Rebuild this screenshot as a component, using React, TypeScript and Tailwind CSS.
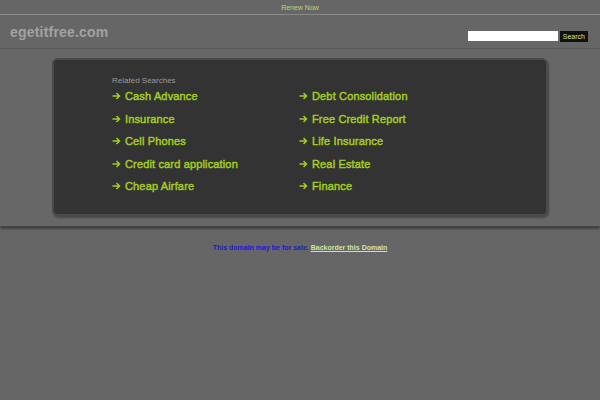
import React from "react";

const leftLinks = ["Cash Advance", "Insurance", "Cell Phones", "Credit card application", "Cheap Airfare"];
const rightLinks = ["Debt Consolidation", "Free Credit Report", "Life Insurance", "Real Estate", "Finance"];

const Arrow = () => (
  <svg width="9" height="8" viewBox="0 0 9 8" className="mr-[4px] shrink-0">
    <path d="M0.5 4H7.5M4.5 1L7.5 4L4.5 7" stroke="#a4cc22" strokeWidth="1.5" fill="none" />
  </svg>
);

const LinkItem = ({ label }: { label: string }) => (
  <a
    href="#"
    className="flex items-center h-[22.5px] text-[11px] text-[#a4cc22] no-underline [-webkit-text-stroke:0.45px_#a4cc22] tracking-[0.15px]"
  >
    <Arrow />
    <span>{label}</span>
  </a>
);

export default function App() {
  return (
    <div className="min-h-[400px] w-full bg-[#666666] font-['Liberation_Sans',Arial,sans-serif]">
      {/* top bar */}
      <div className="h-[15px] flex items-center justify-center border-b border-[#8a8a8a]">
        <a href="#" className="text-[7px] text-[#c4d27a] leading-none">Renew Now</a>
      </div>

      {/* header */}
      <div className="h-[34px] flex items-center justify-between px-[10px] border-b border-[#585858]">
        <div className="text-[14px] font-bold text-[#a2a2a2] mt-[1px] tracking-[0.2px]">egetitfree.com</div>
        <div className="flex items-center gap-[2px] mt-[9px] pr-[2px]">
          <input className="w-[90px] h-[10px] bg-white border-0 outline-none" />
          <button className="h-[11px] px-[3px] bg-[#111] text-[#c8e0a0] text-[7px] leading-none">Search</button>
        </div>
      </div>

      {/* content band */}
      <div className="bg-[#676767] pt-[9px] pb-[10px] shadow-[0_3px_2px_rgba(0,0,0,0.35)]">
        <div className="mx-auto w-[496px] h-[158px] bg-[#333333] rounded-[6px] border-2 border-[#4a4a4a] shadow-[1px_2px_2px_rgba(0,0,0,0.3)] pl-[58px] pt-[17px]">
          <div className="text-[8px] text-[#9a9a9a] leading-none">Related Searches</div>
          <div className="flex">
            <div className="w-[187px]">
              {leftLinks.map((l) => (
                <LinkItem key={l} label={l} />
              ))}
            </div>
            <div>
              {rightLinks.map((l) => (
                <LinkItem key={l} label={l} />
              ))}
            </div>
          </div>
        </div>
      </div>

      {/* footer */}
      <div className="pt-[17px] text-center text-[7px] font-bold">
        <span className="text-[#1a1ad8]">This domain may be for sale. </span>
        <a href="#" className="text-[#d0e4a0] underline">Backorder this Domain</a>
      </div>
    </div>
  );
}
